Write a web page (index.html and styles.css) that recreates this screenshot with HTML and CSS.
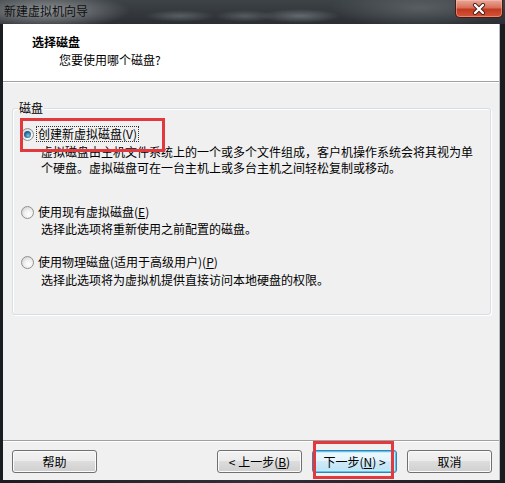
FILE: index.html
```html
<!DOCTYPE html>
<html lang="zh-CN">
<head>
<meta charset="utf-8">
<title>新建虚拟机向导</title>
<link rel="stylesheet" href="styles.css">
</head>
<body>
<div class="window">
  <div class="titlebar">
    <span class="title">新建虚拟机向导</span>
    <div class="close">
      <svg width="22" height="12" viewBox="0 0 22 12">
        <path d="M7 2 L15 10 M15 2 L7 10" stroke="#3b1a14" stroke-width="4" stroke-linecap="round"/>
        <path d="M7 2 L15 10 M15 2 L7 10" stroke="#ffffff" stroke-width="2.4" stroke-linecap="round"/>
      </svg>
    </div>
  </div>
  <div class="frame">
    <div class="client">
      <div class="header">
        <div class="h-title">选择磁盘</div>
        <div class="h-sub">您要使用哪个磁盘?</div>
      </div>
      <div class="body">
        <div class="group">
          <span class="group-label">磁盘</span>
          <div class="opt first">
            <span class="radio checked"></span>
            <span class="opt-label focus">创建新虚拟磁盘(V)</span>
          </div>
          <div class="desc d1">虚拟磁盘由主机文件系统上的一个或多个文件组成，客户机操作系统会将其视为单<br>个硬盘。虚拟磁盘可在一台主机上或多台主机之间轻松复制或移动。</div>
          <div class="opt second">
            <span class="radio"></span>
            <span class="opt-label">使用现有虚拟磁盘(<u>E</u>)</span>
          </div>
          <div class="desc d2">选择此选项将重新使用之前配置的磁盘。</div>
          <div class="opt third">
            <span class="radio"></span>
            <span class="opt-label">使用物理磁盘(适用于高级用户)(<u>P</u>)</span>
          </div>
          <div class="desc d3">选择此选项将为虚拟机提供直接访问本地硬盘的权限。</div>
        </div>
      </div>
      <div class="footer">
        <div class="btn">帮助</div>
        <div class="nav">
          <div class="btn">&lt; 上一步(<u>B</u>)</div>
          <div class="btn default">下一步(<u>N</u>) &gt;</div>
          <div class="btn">取消</div>
        </div>
      </div>
    </div>
  </div>
  <div class="annot annot-opt"></div>
  <div class="annot annot-next"></div>
</div>
</body>
</html>
```
FILE: styles.css
```css
* { box-sizing: border-box; }
html, body { margin: 0; padding: 0; }
body {
  width: 505px;
  height: 483px;
  overflow: hidden;
  font-family: "Noto Sans CJK SC", "Liberation Sans", sans-serif;
  font-size: 12px;
  color: #000;
  background: #25292d;
}
.window {
  position: relative;
  width: 505px;
  height: 483px;
  display: flex;
  flex-direction: column;
  background: linear-gradient(to right, #1a1d20 0, #2e3236 50%, #1a1d20 100%);
}
.titlebar {
  height: 24px;
  flex: none;
  display: flex;
  align-items: flex-start;
  justify-content: space-between;
  background:
    radial-gradient(ellipse 85px 18px at 45px 11px, rgba(150,154,157,0.95), rgba(150,154,157,0) 100%),
    radial-gradient(ellipse 35px 6px at 180px 16px, rgba(120,128,136,0.55), rgba(120,128,136,0) 100%),
    radial-gradient(ellipse 30px 6px at 245px 16px, rgba(120,128,136,0.5), rgba(120,128,136,0) 100%),
    radial-gradient(ellipse 40px 7px at 300px 16px, rgba(140,148,156,0.55), rgba(140,148,156,0) 100%),
    radial-gradient(ellipse 90px 20px at 420px 8px, rgba(110,116,120,0.6), rgba(110,116,120,0) 100%),
    linear-gradient(#3e4347, #2b2f33);
}
.title {
  margin: 3px 0 0 4px;
  line-height: 16px;
  color: #101010;
}
.close {
  width: 48px;
  height: 18px;
  margin-right: 2px;
  display: flex;
  align-items: center;
  justify-content: center;
  border: 1px solid #4a1a12;
  border-top: none;
  border-radius: 0 0 5px 5px;
  background: linear-gradient(#e9a898 0%, #d7705a 45%, #c2391f 55%, #d4553a 100%);
  box-shadow: inset 0 0 0 1px rgba(255,200,190,0.45);
}
.frame {
  flex: 1;
  display: flex;
  padding: 0 5px 3px 3px;
}
.client {
  flex: 1;
  display: flex;
  flex-direction: column;
  background: #f0f0f0;
  border-right: 1px solid #b8bcc0;
}
.header {
  height: 58px;
  flex: none;
  background: #fff;
  border-bottom: 1px solid #a0a0a0;
  padding: 10px 0 0 29px;
}
.h-title {
  font-weight: bold;
  line-height: 16px;
}
.h-sub {
  line-height: 16px;
  margin: 2px 0 0 27px;
}
.body {
  flex: 1;
  padding: 25px 8px 0 9px;
  border-top: 1px solid #fff;
}
.group {
  position: relative;
  height: 207px;
  border: 1px solid #d5dfe5;
  border-radius: 3px;
  box-shadow: inset 1px 1px 0 #fff, 1px 1px 0 #fff;
  padding: 17px 0 0 8px;
}
.group-label {
  position: absolute;
  top: -9px;
  left: 5px;
  padding: 0 1px;
  line-height: 16px;
  background: #f0f0f0;
}
.opt {
  display: flex;
  align-items: center;
  height: 16px;
}
.opt.second { margin-top: 28px; }
.opt.third { margin-top: 17px; }
.radio {
  position: relative;
  width: 13px;
  height: 13px;
  flex: none;
  border-radius: 50%;
  border: 1px solid #8e9092;
  background: radial-gradient(circle at 60% 65%, #ffffff 0%, #f1f1f1 40%, #c8c8c8 100%);
}
.radio.checked::after {
  content: "";
  position: absolute;
  left: 2px;
  top: 2px;
  width: 7px;
  height: 7px;
  border-radius: 50%;
  background: radial-gradient(circle at 60% 65%, #7cc6ea 0%, #2a6e9c 50%, #15344d 100%);
}
.opt-label {
  margin-left: 3px;
  padding: 0 1px;
  line-height: 14px;
  white-space: nowrap;
}
.opt-label.focus {
  outline: 1px dotted #333;
}
.desc {
  padding-left: 20px;
  line-height: 16px;
  white-space: nowrap;
}
.d1 { margin-top: 2px; }
.d2 { margin-top: 1px; }
.d3 { margin-top: 2px; }
.footer {
  height: 40px;
  flex: none;
  border-top: 1px solid #a0a0a0;
  box-shadow: inset 0 1px 0 #fff;
  display: flex;
  justify-content: space-between;
  align-items: flex-start;
  padding: 9px 7px 0 9px;
}
.nav {
  display: flex;
  gap: 10px;
}
.btn {
  width: 85px;
  height: 23px;
  display: flex;
  align-items: center;
  justify-content: center;
  border: 1px solid #707070;
  border-radius: 3px;
  background: linear-gradient(#f2f2f2 0%, #ebebeb 50%, #dddddd 50%, #cfcfcf 100%);
  box-shadow: inset 0 0 0 1px #fbfbfb;
  white-space: nowrap;
}
.btn.default {
  border-color: #3c7fb1;
  background: linear-gradient(#eef8fd 0%, #e2f3fc 50%, #cfeaf8 50%, #bde2f5 100%);
  box-shadow: inset 0 0 0 1px #56c8f0, inset 0 0 0 2px #c4ecfb;
}
.annot {
  position: absolute;
  border: 3px solid #e2393e;
}
.annot-opt {
  left: 20px;
  top: 118px;
  width: 145px;
  height: 34px;
}
.annot-next {
  left: 313px;
  top: 441px;
  width: 81px;
  height: 38px;
}
```
